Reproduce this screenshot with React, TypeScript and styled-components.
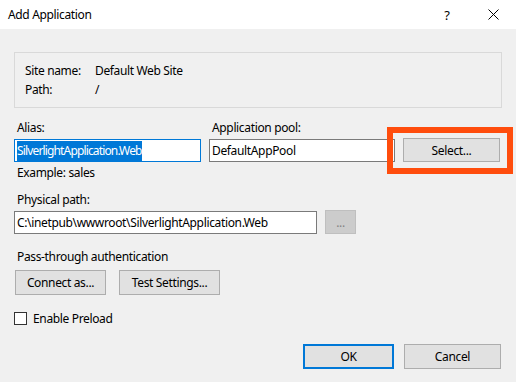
import React from "react"
import styled, { createGlobalStyle } from "styled-components"

const GlobalStyle = createGlobalStyle`
    html, body {
        margin: 0;
        padding: 0;
        background: #f0f0f0;
    }
    * {
        box-sizing: border-box;
    }
`

const Window = styled.div`
    width: 516px;
    height: 382px;
    display: flex;
    flex-direction: column;
    font-family: "Noto Sans", "Liberation Sans", sans-serif;
    font-size: 12px;
    letter-spacing: -0.35px;
    color: #000;
    overflow: hidden;
`

const TitleBar = styled.div`
    height: 29px;
    background: #fff;
    display: flex;
    align-items: center;
    padding-left: 8px;
`

const Title = styled.div`
    flex: 1;
    font-size: 12px;
`

const TitleButton = styled.div`
    width: 46px;
    height: 29px;
    display: flex;
    align-items: center;
    justify-content: center;
    font-size: 13px;
`

const Body = styled.div`
    flex: 1;
    padding: 23px 14px 0 14px;
    display: flex;
    flex-direction: column;
`

const InfoBox = styled.div`
    border: 1px solid #d9d9d9;
    padding: 8px 10px;
    display: grid;
    grid-template-columns: 70px 1fr;
    line-height: 19px;
`

const Label = styled.div<{ $top?: number }>`
    margin-top: ${p => p.$top ?? 0}px;
    padding-left: 3px;
    line-height: 16px;
`

const FieldRow = styled.div`
    display: flex;
    align-items: flex-start;
    gap: 8px;
`

const FieldCol = styled.div<{ $w: number }>`
    width: ${p => p.$w}px;
    display: flex;
    flex-direction: column;
`

const TextBox = styled.div<{ $w?: number; $focused?: boolean }>`
    width: ${p => (p.$w ? `${p.$w}px` : "100%")};
    height: 23px;
    margin-top: 3px;
    background: #fff;
    border: 1px solid ${p => (p.$focused ? "#0078d7" : "#7a7a7a")};
    padding: 0 2px;
    display: flex;
    align-items: center;
    white-space: nowrap;
    overflow: hidden;
`

const Selected = styled.span`
    background: #0078d7;
    color: #fff;
    line-height: 20px;
    letter-spacing: -0.85px;
`

const Button = styled.div<{ $w: number; $h?: number; $default?: boolean; $disabled?: boolean }>`
    width: ${p => p.$w}px;
    height: ${p => p.$h ?? 24}px;
    background: ${p => (p.$disabled ? "#cccccc" : "#e1e1e1")};
    border: ${p =>
        p.$default ? "2px solid #0078d7" : p.$disabled ? "1px solid #bfbfbf" : "1px solid #adadad"};
    color: ${p => (p.$disabled ? "#838383" : "#000")};
    display: flex;
    align-items: center;
    justify-content: center;
    flex-shrink: 0;
`

const SelectWrap = styled.div`
    position: relative;
    margin-top: 30px;
`

const Highlight = styled.div`
    position: absolute;
    left: -16px;
    top: -11px;
    right: -13px;
    bottom: -12px;
    border: 6px solid #ff4d0d;
    pointer-events: none;
`

const EllipsisButton = styled(Button)`
    margin-top: 2px;
`

const ButtonRow = styled.div`
    display: flex;
    gap: 13px;
    margin-top: 5px;
    padding-left: 1px;
`

const CheckRow = styled.div`
    display: flex;
    align-items: center;
    gap: 6px;
    margin-top: 17px;
    line-height: 13px;
`

const CheckBox = styled.div`
    width: 13px;
    height: 13px;
    background: #fff;
    border: 1px solid #333;
`

const Footer = styled.div`
    margin-top: auto;
    margin-bottom: 13px;
    margin-right: 1px;
    display: flex;
    justify-content: flex-end;
    gap: 10px;
`

export default function App() {
    return <Window>
        <GlobalStyle />
        <TitleBar>
            <Title>Add Application</Title>
            <TitleButton>?</TitleButton>
            <TitleButton>
                <svg width="11" height="11" viewBox="0 0 11 11">
                    <path d="M0.5 0.5 L10.5 10.5 M10.5 0.5 L0.5 10.5" stroke="#000" strokeWidth="1" />
                </svg>
            </TitleButton>
        </TitleBar>
        <Body>
            <InfoBox>
                <div>Site name:</div>
                <div>Default Web Site</div>
                <div>Path:</div>
                <div>/</div>
            </InfoBox>

            <FieldRow>
                <FieldCol $w={187}>
                    <Label $top={12}>Alias:</Label>
                    <TextBox $focused>
                        <Selected>SilverlightApplication.Web</Selected>
                    </TextBox>
                </FieldCol>
                <FieldCol $w={186}>
                    <Label $top={12}>Application pool:</Label>
                    <TextBox>DefaultAppPool</TextBox>
                </FieldCol>
                <SelectWrap>
                    <Button $w={97}>Select...</Button>
                    <Highlight />
                </SelectWrap>
            </FieldRow>

            <Label $top={3}>Example: sales</Label>

            <Label $top={11}>Physical path:</Label>
            <FieldRow>
                <TextBox $w={303}>C:\inetpub\wwwroot\SilverlightApplication.Web</TextBox>
                <EllipsisButton $w={31} $disabled>...</EllipsisButton>
            </FieldRow>

            <Label $top={15}>Pass-through authentication</Label>
            <ButtonRow>
                <Button $w={91} $h={25}>Connect as...</Button>
                <Button $w={101} $h={25}>Test Settings...</Button>
            </ButtonRow>

            <CheckRow>
                <CheckBox />
                <span>Enable Preload</span>
            </CheckRow>

            <Footer>
                <Button $w={91} $h={25} $default>OK</Button>
                <Button $w={97} $h={25}>Cancel</Button>
            </Footer>
        </Body>
    </Window>
}
